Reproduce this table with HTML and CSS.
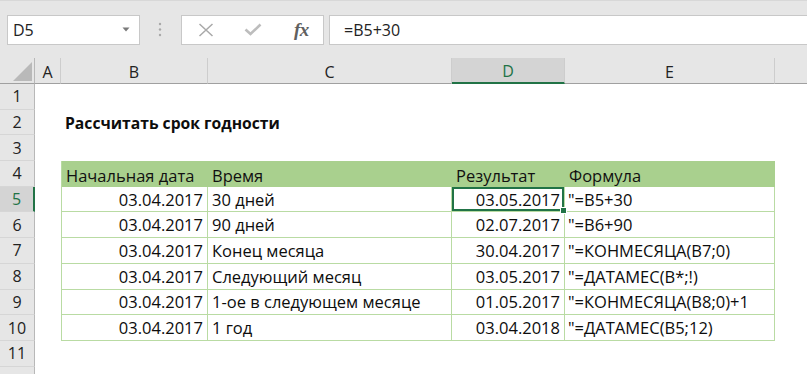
FILE: index.html
```html
<!DOCTYPE html>
<html lang="ru">
<head>
<meta charset="utf-8">
<title>Рассчитать срок годности</title>
<link rel="stylesheet" href="styles.css">
</head>
<body>
<div class="toolbar">
  <div class="namebox">
    <span>D5</span>
    <svg class="dd" width="8" height="5" viewBox="0 0 8 5"><path d="M0.5 0.5 L7.5 0.5 L4 4.5 Z" fill="#7a7a7a"/></svg>
  </div>
  <svg class="dots" width="4" height="16" viewBox="0 0 4 16"><circle cx="2" cy="2" r="1.2" fill="#a8a8a8"/><circle cx="2" cy="7.5" r="1.2" fill="#a8a8a8"/><circle cx="2" cy="13" r="1.2" fill="#a8a8a8"/></svg>
  <div class="fxbox">
    <svg class="ico-x" width="16" height="14" viewBox="0 0 16 14"><path d="M1.5 1 L14.5 13 M14.5 1 L1.5 13" stroke="#a9a9a9" stroke-width="1.5" fill="none"/></svg>
    <svg class="ico-ok" width="18" height="13" viewBox="0 0 18 13"><path d="M1.5 6.5 L6.5 11 L16.5 1.5" stroke="#bdbdbd" stroke-width="2.6" fill="none"/></svg>
    <span class="fx">fx</span>
  </div>
  <div class="formula">=B5+30</div>
</div>

<div class="sheet">
  <div class="corner"><svg width="35" height="26" viewBox="0 0 35 26"><polygon points="32,4 32,23 13,23" fill="#b9b9b9"/></svg></div>
  <div class="c ch">A</div>
  <div class="c ch">B</div>
  <div class="c ch">C</div>
  <div class="c ch sel">D</div>
  <div class="c ch">E</div>
  <div class="c ch last"></div>

  <div class="c rh">1</div>
  <div class="c"></div><div class="c"></div><div class="c"></div><div class="c"></div><div class="c"></div><div class="c"></div>

  <div class="c rh">2</div>
  <div class="c"></div><div class="c title">Рассчитать срок годности</div><div class="c"></div><div class="c"></div><div class="c"></div><div class="c"></div>

  <div class="c rh">3</div>
  <div class="c"></div><div class="c"></div><div class="c"></div><div class="c"></div><div class="c"></div><div class="c"></div>

  <div class="c rh">4</div>
  <div class="c"></div>
  <div class="c th first">Начальная дата</div>
  <div class="c th">Время</div>
  <div class="c th">Результат</div>
  <div class="c th lastcol">Формула</div>
  <div class="c"></div>

  <div class="c rh sel">5</div>
  <div class="c"></div>
  <div class="c t first num">03.04.2017</div>
  <div class="c t">30 дней</div>
  <div class="c t num active">03.05.2017</div>
  <div class="c t f">"=B5+30</div>
  <div class="c"></div>

  <div class="c rh">6</div>
  <div class="c"></div>
  <div class="c t first num">03.04.2017</div>
  <div class="c t">90 дней</div>
  <div class="c t num">02.07.2017</div>
  <div class="c t f">"=B6+90</div>
  <div class="c"></div>

  <div class="c rh">7</div>
  <div class="c"></div>
  <div class="c t first num">03.04.2017</div>
  <div class="c t">Конец месяца</div>
  <div class="c t num">30.04.2017</div>
  <div class="c t f">"=КОНМЕСЯЦА(B7;0)</div>
  <div class="c"></div>

  <div class="c rh">8</div>
  <div class="c"></div>
  <div class="c t first num">03.04.2017</div>
  <div class="c t">Следующий месяц</div>
  <div class="c t num">03.05.2017</div>
  <div class="c t f">"=ДАТАМЕС(B*;!)</div>
  <div class="c"></div>

  <div class="c rh">9</div>
  <div class="c"></div>
  <div class="c t first num">03.04.2017</div>
  <div class="c t">1-ое в следующем месяце</div>
  <div class="c t num">01.05.2017</div>
  <div class="c t f">"=КОНМЕСЯЦА(B8;0)+1</div>
  <div class="c"></div>

  <div class="c rh">10</div>
  <div class="c"></div>
  <div class="c t first num">03.04.2017</div>
  <div class="c t">1 год</div>
  <div class="c t num">03.04.2018</div>
  <div class="c t f">"=ДАТАМЕС(B5;12)</div>
  <div class="c"></div>

  <div class="c rh">11</div>
  <div class="c"></div><div class="c"></div><div class="c"></div><div class="c"></div><div class="c"></div><div class="c"></div>

  <div class="c rh"></div>
  <div class="c"></div><div class="c"></div><div class="c"></div><div class="c"></div><div class="c"></div><div class="c"></div>
</div>
</body>
</html>
```

FILE: styles.css
```css
html, body {
  margin: 0;
  padding: 0;
}
body {
  width: 807px;
  height: 374px;
  overflow: hidden;
  background: #ffffff;
  font-family: "Open Sans", "Liberation Sans", sans-serif;
  color: #0d0d0d;
}

/* ---------- formula bar ---------- */
.toolbar {
  display: flex;
  align-items: center;
  height: 58px;
  box-sizing: border-box;
  padding: 14px 0 14px 7px;
  background: #e6e6e6;
  border-top: 1px solid #d8d8d8;
}
.namebox {
  width: 133px;
  height: 30px;
  box-sizing: border-box;
  background: #ffffff;
  border: 1px solid #c8c8c8;
  display: flex;
  align-items: center;
  justify-content: space-between;
  padding: 0 9px 0 5px;
  font-size: 16px;
  color: #222;
}
.dots {
  margin-left: 18px;
  margin-right: 19px;
}
.fxbox {
  width: 143px;
  height: 30px;
  box-sizing: border-box;
  background: #ffffff;
  border: 1px solid #c8c8c8;
  display: flex;
  align-items: center;
  padding-left: 16px;
}
.ico-x { margin-right: 30px; }
.ico-ok { margin-right: 32px; }
.fx {
  font-family: "Liberation Serif", "DejaVu Serif", serif;
  font-style: italic;
  font-weight: 700;
  font-size: 19px;
  color: #606060;
  letter-spacing: -0.5px;
  line-height: 1;
}
.formula {
  flex: 1;
  height: 30px;
  box-sizing: border-box;
  margin-left: 5px;
  background: #ffffff;
  border: 1px solid #c8c8c8;
  border-right: none;
  display: flex;
  align-items: center;
  padding-left: 14px;
  font-size: 16px;
  color: #222;
}

/* ---------- sheet grid ---------- */
.sheet {
  display: grid;
  grid-template-columns: 35px 26px 147px 244px 113px 210px 32px;
  grid-template-rows: 26px repeat(12, 25.7px);
}
.c {
  display: flex;
  align-items: center;
  box-sizing: border-box;
  padding: 0 4px;
  white-space: nowrap;
  font-size: 16.5px;
  min-width: 0;
}
.corner {
  background: #e6e6e6;
  border-right: 1px solid #b8b8b8;
  border-bottom: 1px solid #a0a0a0;
  box-sizing: border-box;
  overflow: hidden;
}
.corner svg { display: block; }

.ch {
  background: #e6e6e6;
  justify-content: center;
  border-right: 1px solid #cdcdcd;
  border-bottom: 1px solid #a0a0a0;
  color: #222;
  font-size: 16px;
  padding-top: 2px;
}
.ch.last { border-right: none; }
.ch.sel {
  background: #d4d4d4;
  color: #217346;
  border-bottom: 2px solid #217346;
}

.rh {
  background: #e6e6e6;
  justify-content: center;
  border-right: 1px solid #b8b8b8;
  border-bottom: 1px solid #d6d6d6;
  color: #222;
  font-size: 16px;
}
.rh.sel {
  background: #d4d4d4;
  color: #217346;
  border-right: 2px solid #217346;
}

.title {
  font-weight: 700;
  font-size: 15.7px;
  overflow: visible;
}

/* ---------- green table ---------- */
.th {
  background: #a9d08e;
  color: #111;
  padding-top: 4px;
}
.t {
  border-right: 1px solid #b9dba3;
  border-bottom: 1px solid #b9dba3;
}
.first { border-left: 1px solid #b9dba3; }
.num { justify-content: flex-end; padding-right: 4px; }
.f { padding-left: 3px; }

.active {
  position: relative;
  box-shadow: inset 0 0 0 2px #217346;
}
.active::after {
  content: "";
  position: absolute;
  right: -3px;
  bottom: -3px;
  width: 5px;
  height: 5px;
  background: #217346;
  border: 1px solid #ffffff;
}
```
